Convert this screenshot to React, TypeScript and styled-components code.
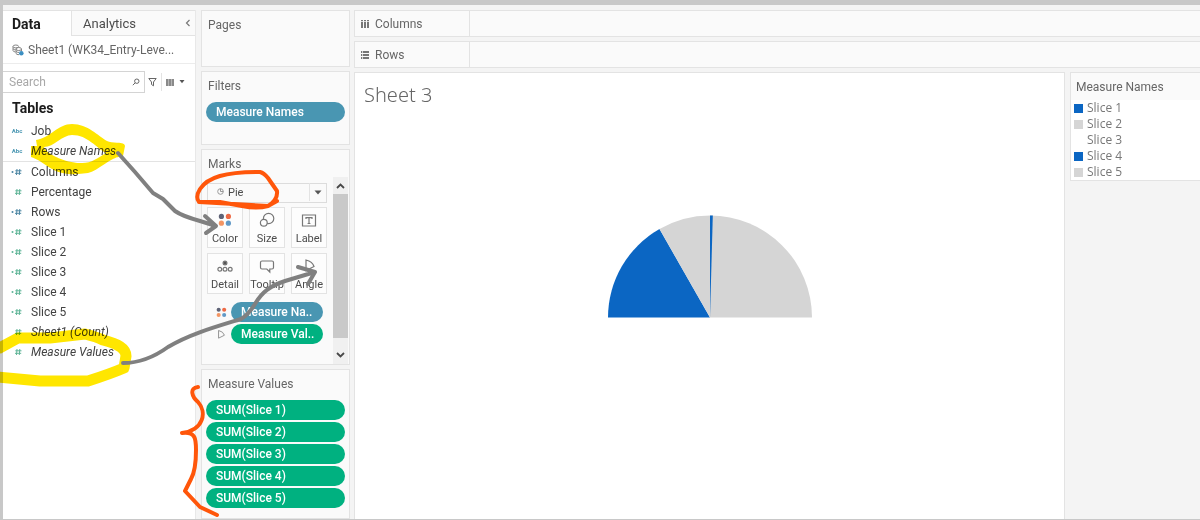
import React from "react";
import styled, { createGlobalStyle, css } from "styled-components";

const color = {
  frame: "#c8c8c8",
  page: "#f4f4f4",
  card: "#fafafa",
  line: "#e3e3e3",
  text: "#4c4c4c",
  muted: "#666666",
  blue: "#0b66c3",
  grey: "#d5d5d5",
  discrete: "#4996b2",
  continuous: "#00b180",
};

const GlobalStyle = createGlobalStyle`
  *, *::before, *::after { box-sizing: border-box; }
  body { margin: 0; background: ${color.page}; }
  body, button, input, select { font-family: Roboto, "Liberation Sans", sans-serif; font-size: 12px; }
  h1, h2, ul { margin: 0; padding: 0; font-weight: 400; }
  ul { list-style: none; }
  button { cursor: pointer; }
  svg { flex: none; }
`;

const Workbook = styled.div`
  position: relative;
  display: flex;
  min-height: 100vh;
  border: solid ${color.frame};
  border-width: 5px 0 1px 3px;
  color: ${color.text};
  line-height: 20px;
`;

/* Data pane */
const DataPane = styled.aside`
  flex: none;
  width: 193px;
  margin-top: 5px;
  background: #fff;
  border-right: 1px solid #e8e8e8;
`;

const Tabs = styled.div`
  display: flex;
  height: 26px;
  border-top: 1px solid ${color.line};
`;

const Tab = styled.button<{ $active?: boolean }>`
  display: flex;
  align-items: center;
  justify-content: space-between;
  flex: ${(p) => (p.$active ? "none" : 1)};
  width: ${(p) => (p.$active ? "68px" : "auto")};
  border: 0;
  padding: 0 4px 0 ${(p) => (p.$active ? 9 : 11)}px;
  background: #fff;
  color: ${color.text};
  font-size: 13px;
  ${(p) =>
    p.$active
      ? css`font-size: 14px; font-weight: 700; color: #1c1c1c;`
      : css`background: ${color.card}; border-left: 1px solid ${color.line}; border-bottom: 1px solid ${color.line};`}
`;

const Source = styled.div`
  display: flex;
  align-items: center;
  gap: 4px;
  height: 28px;
  padding-left: 9px;
  border-bottom: 1px solid #ececec;
  color: ${color.muted};
  white-space: nowrap;
`;

const SearchRow = styled.div`
  display: flex;
  align-items: center;
  height: 22px;
  margin-top: 7px;
  color: ${color.muted};
`;

const SearchBox = styled.label`
  display: flex;
  align-items: center;
  width: 142px;
  height: 22px;
  padding-right: 4px;
  border: 1px solid #d4d4d4;
  border-left: 0;
`;

const SearchInput = styled.input`
  flex: 1;
  min-width: 0;
  border: 0;
  outline: 0;
  padding: 0 0 0 6px;
  background: transparent;
  &::placeholder { color: #a8a8a8; opacity: 1; }
`;

const ToolButton = styled.button<{ $divided?: boolean }>`
  display: flex;
  align-items: center;
  gap: 5px;
  height: 18px;
  border: 0;
  padding: 0 4px 0 3px;
  background: none;
  color: ${color.muted};
  ${(p) => p.$divided && css`border-left: 1px solid ${color.line}; padding-left: 4px;`}
`;

const TablesTitle = styled.h2`
  padding: 5px 9px 3px;
  font-size: 14px;
  font-weight: 700;
  color: #1c1c1c;
`;

const FieldList = styled.ul`
  & + & { border-top: 1px solid ${color.line}; }
`;

const Field = styled.li<{ $italic?: boolean }>`
  display: flex;
  align-items: center;
  gap: 8px;
  height: 20px;
  padding-left: 8px;
  color: #424242;
  font-style: ${(p) => (p.$italic ? "italic" : "normal")};
`;

const Abc = styled.span`
  width: 12px;
  font: 700 6px/20px Roboto, sans-serif;
  color: ${color.discrete};
  text-align: center;
`;

/* Shelves and cards */
const Cards = styled.section`
  flex: none;
  display: flex;
  flex-direction: column;
  gap: 4px;
  width: 149px;
  margin: 5px 0 0 5px;
`;

const Card = styled.div<{ $height?: number }>`
  min-height: ${(p) => (p.$height ? `${p.$height}px` : "auto")};
  flex: ${(p) => (p.$height ? "none" : 1)};
  padding-top: 4px;
  border: 1px solid ${color.line};
  background: ${color.card};
`;

const CardTitle = styled.h2`
  padding-left: 6px;
  font-size: 12px;
  line-height: 20px;
  color: ${color.muted};
`;

const PillStack = styled.div`
  display: flex;
  flex-direction: column;
  gap: 2px;
  padding: 6px 4px;
`;

const Pill = styled.button<{ $continuous?: boolean }>`
  flex: 1;
  min-width: 0;
  height: 20px;
  min-height: 20px;
  padding: 0 9px 0 10px;
  border: 0;
  border-radius: 10px;
  background: ${(p) => (p.$continuous ? color.continuous : color.discrete)};
  color: #fff;
  font-weight: 500;
  line-height: 20px;
  text-align: left;
  white-space: nowrap;
`;

const MarksBody = styled.div`
  display: flex;
  justify-content: space-between;
  padding: 3px 1px 0 5px;
`;

const MarksControls = styled.div`
  width: 120px;
  padding-top: 5px;
`;

const MarkType = styled.label`
  position: relative;
  display: block;
  height: 20px;
  & > svg { position: absolute; top: 6px; left: 10px; pointer-events: none; }
  & > svg:last-child { left: 102px; top: 0; }
`;

const MarkSelect = styled.select`
  appearance: none;
  width: 120px;
  height: 20px;
  padding: 0 0 0 20px;
  border: 1px solid #dcdcdc;
  border-radius: 0;
  background: ${color.card};
  color: ${color.text};
  font-size: 11px;
`;

const MarkGrid = styled.div`
  display: grid;
  grid-template-columns: repeat(3, 36px);
  justify-content: space-between;
  row-gap: 5px;
  padding: 5px 0 8px;
`;

const MarkButton = styled.button`
  display: flex;
  flex-direction: column;
  align-items: center;
  justify-content: space-between;
  height: 41px;
  padding: 3px 0 1px;
  border: 1px solid ${color.line};
  background: #fdfdfd;
  color: ${color.text};
  font-size: 11px;
  line-height: 14px;
`;

const Encoding = styled.div`
  display: flex;
  align-items: center;
  gap: 4px;
  width: 116px;
  padding-left: 9px;
  margin-bottom: 2px;
`;

const Scrollbar = styled.div`
  display: flex;
  flex-direction: column;
  width: 15px;
  height: 187px;
  background: #f0f0f0;
`;

const ScrollButton = styled.button`
  display: flex;
  align-items: center;
  justify-content: center;
  width: 15px;
  height: 17px;
  padding: 0;
  border: 0;
  background: none;
  &:last-child { height: 26px; padding-top: 8px; }
`;

const Thumb = styled.div`
  flex: 1;
  background: #c9c9c9;
`;

/* View */
const View = styled.main`
  flex: 1;
  min-width: 0;
  display: flex;
  flex-direction: column;
  gap: 4px;
  margin: 5px 0 0 4px;
`;

const Shelf = styled.div`
  display: flex;
  height: 27px;
  border: 1px solid ${color.line};
  border-right: 0;
  background: ${color.card};
`;

const ShelfName = styled.div`
  display: flex;
  align-items: center;
  gap: 6px;
  width: 115px;
  padding-left: 6px;
  border-right: 1px solid ${color.line};
  color: ${color.muted};
`;

const Canvas = styled.div`
  flex: 1;
  display: flex;
  align-items: flex-start;
  gap: 5px;
`;

const Sheet = styled.section`
  flex: 1;
  align-self: stretch;
  display: flex;
  flex-direction: column;
  align-items: center;
  border: 1px solid ${color.line};
  border-bottom: 0;
  background: #fff;
`;

const SheetTitle = styled.h1`
  align-self: stretch;
  padding: 8px 9px 0;
  margin-bottom: 106px;
  font-family: "Noto Sans", sans-serif;
  font-size: 20px;
  font-weight: 300;
  line-height: 28px;
  color: ${color.muted};
`;

const Legend = styled.aside`
  flex: none;
  width: 130px;
  border: 1px solid ${color.line};
  border-right: 0;
  background: #fff;
`;

const LegendTitle = styled.h2`
  padding: 4px 5px 3px;
  font-size: 12px;
  background: ${color.card};
  color: ${color.muted};
`;

const LegendItem = styled.li<{ $swatch: string }>`
  display: flex;
  align-items: center;
  gap: 4px;
  height: 16px;
  padding-left: 3px;
  font-family: "Open Sans", sans-serif;
  font-size: 12px;
  color: #787878;
  &::before {
    content: "";
    width: 9px;
    height: 9px;
    background: ${(p) => p.$swatch};
  }
`;

const Ink = styled.svg<{ $highlighter?: boolean }>`
  position: absolute;
  top: -5px;
  left: -3px;
  pointer-events: none;
  mix-blend-mode: ${(p) => (p.$highlighter ? "multiply" : "normal")};
`;

const HashIcon = ({ tone, calc }: { tone: string; calc?: boolean }) => (
  <svg width="12" height="10" viewBox="0 0 12 10" fill="none" stroke={tone} aria-hidden="true">
    {calc && <circle cx="1.5" cy="5" r="1" fill={tone} stroke="none" />}
    <path d="M6 2 5.5 8M8.8 2l-.5 6M4.3 3.8h6.2M4 6.3h6.2" />
  </svg>
);

const Dots = () => (
  <>
    <circle cx="3.4" cy="3.4" r="2.6" fill="#5f6377" />
    <circle cx="10.4" cy="3.4" r="2.6" fill="#ee6a45" />
    <circle cx="3.4" cy="10.2" r="2.6" fill="#f39563" />
    <circle cx="10.4" cy="10.2" r="2.6" fill="#6199c6" />
  </>
);

const Glyph = ({ children }: { children: React.ReactNode }) => (
  <svg width="16" height="18" viewBox="0 0 16 18" fill="none" stroke="#777" strokeWidth="1.2" aria-hidden="true">
    {children}
  </svg>
);

const AngleGlyph = () => <path d="M5 3v10.5L13 9.5Q11.5 4.5 5 3Z" />;

const Chevron = ({ up }: { up?: boolean }) => (
  <svg width="9" height="6" viewBox="0 0 9 6" fill="none" stroke="#484848" strokeWidth="1.8" aria-hidden="true">
    <path d={up ? "M1 5l3.5-3.5L8 5" : "M1 1l3.5 3.5L8 1"} />
  </svg>
);

const marks: { name: string; icon: React.ReactNode }[] = [
  { name: "Color", icon: <svg width="16" height="18" viewBox="-1 -2 16 18" aria-hidden="true"><Dots /></svg> },
  { name: "Size", icon: <Glyph><circle cx="9.6" cy="7.5" r="5.2" /><circle cx="4.8" cy="11.8" r="3.4" fill="#fdfdfd" /></Glyph> },
  { name: "Label", icon: <Glyph><path d="M1.5 4h13v11h-13zM5 7.900V6.700h6v1.200M8 6.700v5.800M6.600 12.500h2.800" /></Glyph> },
  { name: "Detail", icon: <Glyph><circle cx="8" cy="6" r="1.9" fill="#555" /><circle cx="2.800" cy="12.300" r="1.9" /><circle cx="8" cy="12.300" r="1.9" /><circle cx="13.200" cy="12.300" r="1.9" /></Glyph> },
  { name: "Tooltip", icon: <Glyph><path d="M3 4h10q1.500 0 1.500 1.500v5Q14.500 12 13 12h-2.200v3L7.800 12H3Q1.500 12 1.500 10.500v-5Q1.500 4 3 4Z" /></Glyph> },
  { name: "Angle", icon: <Glyph><AngleGlyph /></Glyph> },
];

const measures = [
  { name: "Columns", calc: true, tone: "#4d86a3" },
  { name: "Percentage" },
  { name: "Rows", calc: true, tone: "#4d86a3" },
  ...[1, 2, 3, 4, 5].map((n) => ({ name: `Slice ${n}`, calc: true })),
  { name: "Sheet1 (Count)", italic: true },
  { name: "Measure Values", italic: true },
] as { name: string; calc?: boolean; tone?: string; italic?: boolean }[];

const slices = [
  { name: "Slice 1", tone: color.blue },
  { name: "Slice 2", tone: color.grey },
  { name: "Slice 3", tone: "#ffffff" },
  { name: "Slice 4", tone: color.blue },
  { name: "Slice 5", tone: color.grey },
];

const PieChart = () => (
  <svg width="204" height="103" viewBox="0 0 204 103" role="img" aria-label="Pie chart of measure values">
    <path d="M102 102.500H0A102 102 0 0 1 51.500 14Z" fill={color.blue} />
    <path d="M102 102.500 51.500 14A102 102 0 0 1 102 .5Z" fill={color.grey} />
    <path d="M102 102.500V.5A102 102 0 0 1 204 102.500Z" fill={color.grey} />
    <path d="M102 102.500V.5h2.800Z" fill={color.blue} />
  </svg>
);

export default function App() {
  return (
    <>
      <GlobalStyle />
      <Workbook>
        <DataPane>
          <Tabs role="tablist">
            <Tab role="tab" aria-selected="true" $active>Data</Tab>
            <Tab role="tab" aria-selected="false">
              Analytics
              <svg width="6" height="8" viewBox="0 0 6 8" fill="none" stroke="#777" strokeWidth="1.2" aria-hidden="true"><path d="M4.500 1 1.500 4l3 3" /></svg>
            </Tab>
          </Tabs>
          <Source>
            <svg width="12" height="12" viewBox="0 0 12 12" fill="none" stroke="#858585" aria-hidden="true">
              <path d="M1 2.500v4q0 1.200 2.500 1.500M1 2.500q0-1.500 2.800-1.500t2.800 1.500-2.800 1.400T1 2.500M1 4.700q1 1.200 2.500 1.200" />
              <path d="M4 5v4.500q.5 1.200 3 1.200M4 5q0-1.500 2.700-1.500T9.500 5 6.700 6.500 4 5m0 2.300q1 1.200 3 1.200M9.500 5v2" />
              <circle cx="9.300" cy="9.300" r="2.300" fill="#3c8fc2" stroke="none" />
            </svg>
            Sheet1 (WK34_Entry-Leve...
          </Source>
          <SearchRow>
            <SearchBox>
              <SearchInput placeholder="Search" aria-label="Search" />
              <svg width="8" height="8" viewBox="0 0 8 8" fill="none" stroke="#666" aria-hidden="true"><circle cx="4.800" cy="3.200" r="2.200" /><path d="M3.200 4.800.8 7.200" /></svg>
            </SearchBox>
            <ToolButton aria-label="Filter fields">
              <svg width="9" height="10" viewBox="0 0 9 10" fill="none" stroke="currentColor" aria-hidden="true"><path d="M.8 1.500h7.400L5.500 5v3.800L3.500 7.500V5Z" /></svg>
            </ToolButton>
            <ToolButton aria-label="View options" $divided>
              <svg width="8" height="7" viewBox="0 0 8 7" aria-hidden="true">
                <path d="M0 0h8v7H0z" fill="#b5b5b5" />
                <path d="M0 0h2v7H0zM3 0h2v7H3zM6 0h2v7H6z" fill="#8a8a8a" />
              </svg>
              <svg width="6" height="4" viewBox="0 0 6 4" fill="#555" aria-hidden="true"><path d="M.5 0h5L3 3.200z" /></svg>
            </ToolButton>
          </SearchRow>
          <TablesTitle>Tables</TablesTitle>
          <FieldList>
            <Field><Abc>Abc</Abc>Job</Field>
            <Field $italic><Abc>Abc</Abc>Measure Names</Field>
          </FieldList>
          <FieldList>
            {measures.map((m) => (
              <Field key={m.name} $italic={m.italic}>
                <HashIcon tone={m.tone ?? "#5fb497"} calc={m.calc} />
                {m.name}
              </Field>
            ))}
          </FieldList>
        </DataPane>

        <Cards>
          <Card $height={57}><CardTitle>Pages</CardTitle></Card>
          <Card $height={74}>
            <CardTitle>Filters</CardTitle>
            <PillStack><Pill>Measure Names</Pill></PillStack>
          </Card>
          <Card $height={216}>
            <CardTitle>Marks</CardTitle>
            <MarksBody>
              <MarksControls>
                <MarkType>
                  <MarkSelect aria-label="Mark type" defaultValue="Pie"><option>Pie</option></MarkSelect>
                  <svg width="7" height="7" viewBox="0 0 7 7" fill="none" stroke="#999" aria-hidden="true"><circle cx="3.500" cy="3.500" r="2.800" /><path d="M3.500.7v2.800h2.800" /></svg>
                  <svg width="18" height="20" viewBox="0 0 18 20" aria-hidden="true"><path d="M.5 1v18" stroke="#e3e3e3" /><path d="M5.500 8.500h7L9 12.500z" fill="#555" /></svg>
                </MarkType>
                <MarkGrid>
                  {marks.map((m) => <MarkButton key={m.name}>{m.icon}{m.name}</MarkButton>)}
                </MarkGrid>
                <Encoding>
                  <svg width="11" height="11" viewBox="0 0 14 14" aria-hidden="true"><Dots /></svg>
                  <Pill>Measure Na..</Pill>
                </Encoding>
                <Encoding>
                  <svg width="11" height="11" viewBox="2 1 14 15" fill="none" stroke="#888" strokeWidth="1.200" aria-hidden="true"><AngleGlyph /></svg>
                  <Pill $continuous>Measure Val..</Pill>
                </Encoding>
              </MarksControls>
              <Scrollbar>
                <ScrollButton aria-label="Scroll up"><Chevron up /></ScrollButton>
                <Thumb />
                <ScrollButton aria-label="Scroll down"><Chevron /></ScrollButton>
              </Scrollbar>
            </MarksBody>
          </Card>
          <Card>
            <CardTitle>Measure Values</CardTitle>
            <PillStack>
              {slices.map((s) => <Pill key={s.name} $continuous>SUM({s.name})</Pill>)}
            </PillStack>
          </Card>
        </Cards>

        <View>
          <Shelf>
            <ShelfName>
              <svg width="8" height="8" viewBox="0 0 8 8" fill="#777" aria-hidden="true"><path d="M0 0h2v1.300H0zM3 0h2v1.300H3zM6 0h2v1.300H6zM0 2h2v6H0zM3 2h2v6H3zM6 2h2v6H6z" /></svg>
              Columns
            </ShelfName>
          </Shelf>
          <Shelf>
            <ShelfName>
              <svg width="8" height="8" viewBox="0 0 8 8" fill="#777" aria-hidden="true"><path d="M0 0h1.300v2H0zM0 3h1.300v2H0zM0 6h1.300v2H0zM2 0h6v2H2zM2 3h6v2H2zM2 6h6v2H2z" /></svg>
              Rows
            </ShelfName>
          </Shelf>
          <Canvas>
            <Sheet>
              <SheetTitle>Sheet 3</SheetTitle>
              <PieChart />
            </Sheet>
            <Legend>
              <LegendTitle>Measure Names</LegendTitle>
              <ul>
                {slices.map((s) => <LegendItem key={s.name} $swatch={s.tone}>{s.name}</LegendItem>)}
              </ul>
            </Legend>
          </Canvas>
        </View>

        <Ink $highlighter width="350" height="520" viewBox="0 0 350 520" fill="none" aria-hidden="true">
          <path fill="#ffe600" fillRule="evenodd" d="M31 146H37L36 140C50 138 58 124 72 124C88 124 98 136 107 141C112 144 125 141 125 146L123 156C110 157 98 171 88 173C75 175 62 175 52 169C45 165 38 159 31 157ZM44 147C46 154 66 163 80 163C90 164 98 158 106 153C96 148 88 135 72 135C62 135 54 147 44 147Z" />
          <path stroke="#ffe600" strokeWidth="11" strokeLinejoin="round" d="M-2 349 18 338H50L85 334Q97 337 103 340C118 344 126 348 126 356L124 368Q110 374 88 381H40L-2 377" />
        </Ink>
        <Ink width="350" height="520" viewBox="0 0 350 520" fill="none" strokeLinecap="round" strokeLinejoin="round" strokeWidth="4" aria-hidden="true">
          <g stroke="#808080">
            <path d="M118 153 135 172 153 193 163 199 175 211Q182 216 200 221L216 226M205 216 216 226 206 233" />
            <path d="M123 363Q146 363 168 347C190 334 215 327 241 319Q248 315 255 304C262 292 270 286 285 281L315 272M298 267 315 272 308 284" />
          </g>
          <g stroke="#ff560a">
            <path d="M277 201 268 206 199 202Q195 197 200 189C208 177 225 172 260 172Q264 173 268 178L277 191Q278 200 268 206Q257 209 242 206L220 202H199" />
            <path d="M198 387C189 388 192 397 198 402C207 412 204 430 182 433C196 431 196 440 196 450Q196 470 191 479L185 491 200 507 217 515" />
          </g>
        </Ink>
      </Workbook>
    </>
  );
}
